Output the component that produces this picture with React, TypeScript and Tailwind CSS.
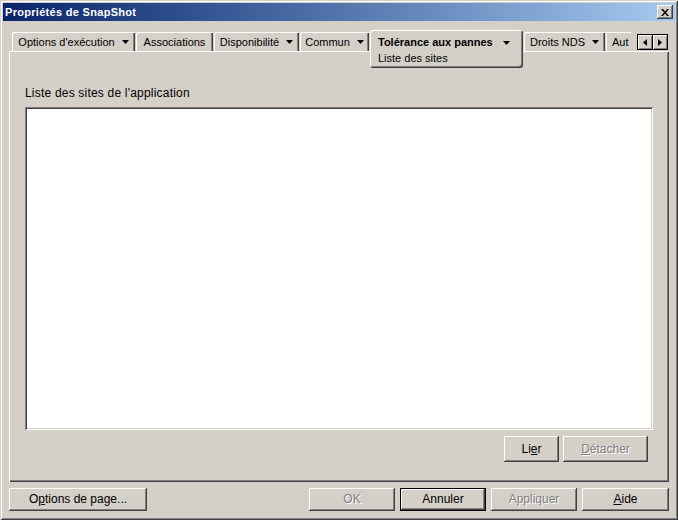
import React from 'react';

const raised =
    'shadow-[inset_-1px_-1px_0_#404040,inset_1px_1px_0_#ffffff,inset_-2px_-2px_0_#808080,inset_2px_2px_0_#d4d0c8]';
const raisedDefault =
    'border border-black shadow-[inset_-1px_-1px_0_#404040,inset_1px_1px_0_#ffffff,inset_-2px_-2px_0_#808080]';
const disabledText = 'text-[#808080] [text-shadow:1px_1px_0_#ffffff]';

function Caret({ className = '' }: { className?: string }) {
    return (
        <svg width="7" height="4" viewBox="0 0 7 4" className={className}>
            <path d="M0 0h7L3.5 4z" fill="#000" />
        </svg>
    );
}

type Tab = { label: string; width: string; caret: boolean };

const leftTabs: Tab[] = [
    { label: "Options d'exécution", width: 'w-[123px]', caret: true },
    { label: 'Associations', width: 'w-[77px]', caret: false },
    { label: 'Disponibilité', width: 'w-[85px]', caret: true },
    { label: 'Commun', width: 'w-[69px]', caret: true },
];

function TabItem({ tab }: { tab: Tab }) {
    return (
        <div
            className={`${tab.width} mt-[2px] h-[19px] pt-[1px] rounded-tl-[2px] flex items-center justify-center gap-[7px] shadow-[inset_1px_1px_0_#ffffff,inset_-1px_0_0_#404040,inset_-2px_0_0_#808080] whitespace-nowrap`}
        >
            <span>{tab.label}</span>
            {tab.caret && <Caret />}
        </div>
    );
}

function Button({
    children,
    className = '',
    disabled = false,
    isDefault = false,
}: {
    children: React.ReactNode;
    className?: string;
    disabled?: boolean;
    isDefault?: boolean;
}) {
    return (
        <div
            className={`${className} flex items-center justify-center bg-[#d4d0c8] text-[12px] ${isDefault ? raisedDefault : raised} ${disabled ? disabledText : ''}`}
        >
            {children}
        </div>
    );
}

export default function App() {
    return (
        <div className="w-[678px] h-[520px] bg-[#d4d0c8] p-[3px] flex flex-col text-[11px] leading-[13px] text-black font-['Liberation_Sans',Arial,sans-serif] shadow-[inset_1px_1px_0_#d4d0c8,inset_-1px_-1px_0_#404040,inset_2px_2px_0_#ffffff,inset_-2px_-2px_0_#808080]">
            {/* title bar */}
            <div className="h-[18px] flex items-center justify-between bg-gradient-to-r from-[#0a246a] to-[#a6caf0] pl-[2px] pr-[2px]">
                <span className="text-white font-bold text-[11px] tracking-[0.3px]">Propriétés de SnapShot</span>
                <div className={`w-[16px] h-[14px] bg-[#d4d0c8] ${raised} flex items-center justify-center`}>
                    <svg width="8" height="7" viewBox="0 0 8 7">
                        <path d="M0 0h2l2 2.5L6 0h2L5 3.5 8 7H6L4 4.5 2 7H0l3-3.5z" fill="#000" />
                    </svg>
                </div>
            </div>

            <div className="flex-1 flex flex-col px-[6px]">
                {/* tabs row */}
                <div className="mt-[9px] h-[21px] flex items-start gap-[1px] pl-[3px]">
                    {leftTabs.map((t) => (
                        <TabItem key={t.label} tab={t} />
                    ))}
                    <div className="relative z-10 w-[153px] h-[38px] bg-[#d4d0c8] rounded-[3px] shadow-[inset_1px_1px_0_#ffffff,inset_-1px_-1px_0_#404040,inset_-2px_-2px_0_#808080] pl-[8px] pt-[6px] flex flex-col">
                        <div className="flex items-center gap-[10px] font-bold h-[13px]">
                            <span>Tolérance aux pannes</span>
                            <Caret />
                        </div>
                        <div className="mt-[3px]">Liste des sites</div>
                    </div>
                    <TabItem tab={{ label: 'Droits NDS', width: 'w-[81px]', caret: true }} />
                    <div className="w-[25px] mt-[2px] h-[19px] pt-[1px] pl-[6px] flex items-center shadow-[inset_1px_1px_0_#ffffff] whitespace-nowrap">
                        Aut
                    </div>
                    <div className="ml-auto mr-[1px] mt-[4px] flex">
                        <div className="w-[16px] h-[16px] border border-black shadow-[inset_1px_1px_0_#ffffff,inset_-1px_-1px_0_#808080] flex items-center justify-center">
                            <svg width="4" height="7" viewBox="0 0 4 7">
                                <path d="M4 0v7L0 3.5z" fill="#000" />
                            </svg>
                        </div>
                        <div className="w-[15px] h-[16px] border border-l-0 border-black shadow-[inset_1px_1px_0_#ffffff,inset_-1px_-1px_0_#808080] flex items-center justify-center">
                            <svg width="4" height="7" viewBox="0 0 4 7">
                                <path d="M0 0v7l4-3.5z" fill="#000" />
                            </svg>
                        </div>
                    </div>
                </div>

                {/* panel */}
                <div className="h-[431px] flex flex-col pl-[16px] pt-[35px] shadow-[inset_1px_1px_0_#ffffff,inset_-1px_-1px_0_#404040,inset_-2px_-2px_0_#808080]">
                    <div className="h-[14px] text-[12px] leading-[14px] tracking-[0.2px]">Liste des sites de l'application</div>
                    <div className="mt-[7px] w-[628px] h-[323px] bg-white shadow-[inset_1px_1px_0_#808080,inset_-1px_-1px_0_#ffffff,inset_2px_2px_0_#404040,inset_-2px_-2px_0_#d4d0c8]" />
                    <div className="w-[628px] mt-[6px] flex justify-end gap-[4px] pr-[5px]">
                        <Button className="w-[55px] h-[26px]">
                            <span>
                                Li<span className="underline">e</span>r
                            </span>
                        </Button>
                        <Button className="w-[85px] h-[26px]" disabled>
                            <span>
                                <span className="underline">D</span>étacher
                            </span>
                        </Button>
                    </div>
                </div>

                {/* bottom buttons */}
                <div className="mt-[6px] h-[23px] flex items-center">
                    <Button className="w-[138px] h-[23px]">
                        <span>
                            O<span className="underline">p</span>tions de page...
                        </span>
                    </Button>
                    <div className="ml-auto flex gap-[5px]">
                        <Button className="w-[86px] h-[23px]" disabled>
                            OK
                        </Button>
                        <Button className="w-[86px] h-[23px]" isDefault>
                            Annuler
                        </Button>
                        <Button className="w-[86px] h-[23px]" disabled>
                            Appliquer
                        </Button>
                        <Button className="w-[87px] h-[23px]">
                            <span>
                                <span className="underline">A</span>ide
                            </span>
                        </Button>
                    </div>
                </div>
            </div>
        </div>
    );
}
